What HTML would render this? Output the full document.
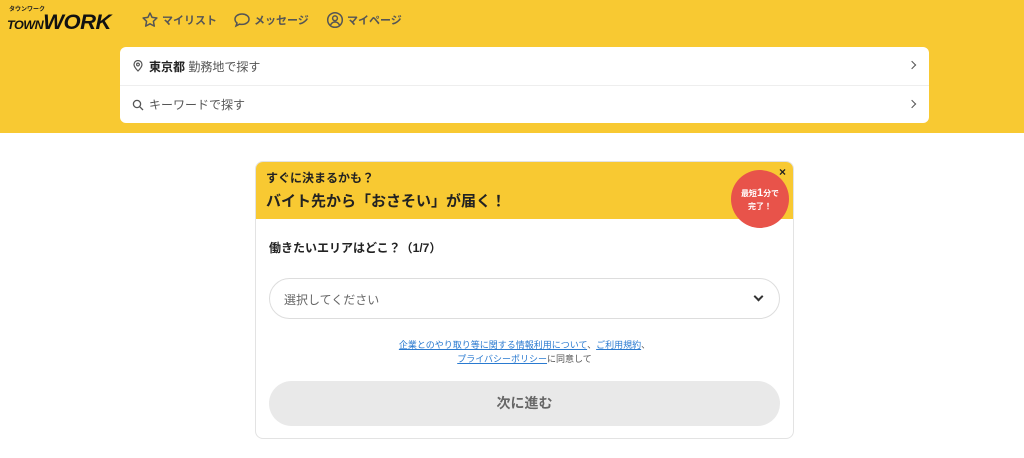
<!DOCTYPE html>
<html><head><meta charset="utf-8"><style>
*{box-sizing:border-box;margin:0;padding:0}
body{width:1024px;height:458px;overflow:hidden;background:#fff;font-family:"Liberation Sans","Noto Sans CJK JP",sans-serif;color:#222;position:relative}
.top{position:absolute;left:0;top:0;width:1024px;height:133px;background:#f8c932}
.logo{position:absolute;left:7px;top:7px}
.nav{position:absolute;top:11px;font-size:11px;color:#555;display:flex;align-items:center;gap:3px;font-weight:bold}
.search{position:absolute;left:120px;top:47px;width:809px;height:76px;background:#fff;border-radius:6px}
.row{height:38px;display:flex;align-items:center;padding-left:12px;font-size:12px;color:#555;position:relative}
.row+.row{border-top:1px solid #eee}
.chev{position:absolute;right:14px;top:15px;width:6px;height:6px;border-right:1.5px solid #555;border-top:1.5px solid #555;transform:rotate(45deg)}
.card{position:absolute;left:255px;top:161px;width:539px;height:278px;border:1px solid #e3e3e3;border-radius:8px;overflow:hidden}
.head{height:57px;background:#f8c932;padding:7px 0 0 10px}
.badge{position:absolute;left:731px;top:170px;width:58px;height:58px;border-radius:50%;background:#e8534a;color:#fff;font-size:8px;text-align:center;padding-top:17px;line-height:13px;font-weight:bold}
.sel{position:absolute;left:269px;top:278px;width:511px;height:41px;border:1px solid #ddd;border-radius:21px;font-size:12px;color:#666;padding:12px 0 0 14px}
.btn{position:absolute;left:269px;top:381px;width:511px;height:45px;background:#e9e9e9;border-radius:23px;text-align:center;font-size:14px;font-weight:bold;color:#666;line-height:45px}
a{color:#2a7ad0;text-decoration:underline}
</style></head><body>
<div class="top">
 <div class="logo"><div style="font-size:6px;font-weight:bold;margin-left:2px;line-height:6px">タウンワーク</div><div style="font-weight:900;font-style:italic;font-size:21px;line-height:19px;letter-spacing:-0.5px;color:#111;transform:scaleX(1.05);transform-origin:left"><span style="font-size:12px">TOWN</span>WORK</div></div>
 <div class="nav" style="left:141px"><svg width="18" height="18" viewBox="0 0 18 18"><path d="M9 2l2.1 4.4 4.8.6-3.5 3.3.9 4.8L9 12.8l-4.3 2.3.9-4.8L2.1 7l4.8-.6z" fill="none" stroke="#555" stroke-width="1.5" stroke-linejoin="round"/></svg>マイリスト</div>
 <div class="nav" style="left:233px"><svg width="18" height="18" viewBox="0 0 18 18"><path d="M9 3c4 0 7 2.3 7 5.2s-3 5.2-7 5.2c-.9 0-1.7-.1-2.4-.3L3 15l1-3C2.8 11 2 9.7 2 8.2 2 5.3 5 3 9 3z" fill="none" stroke="#555" stroke-width="1.5"/></svg>メッセージ</div>
 <div class="nav" style="left:326px"><svg width="18" height="18" viewBox="0 0 18 18"><circle cx="9" cy="9" r="7.3" fill="none" stroke="#555" stroke-width="1.5"/><circle cx="9" cy="7.3" r="2.4" fill="none" stroke="#555" stroke-width="1.5"/><path d="M4.5 14c1-2 2.5-3 4.5-3s3.5 1 4.5 3" fill="none" stroke="#555" stroke-width="1.5"/></svg>マイページ</div>
 <div class="search">
  <div class="row"><svg width="12" height="12" viewBox="0 0 12 12" style="margin-right:5px"><path d="M6 11S2 7 2 4.5a4 4 0 018 0C10 7 6 11 6 11z" fill="none" stroke="#555" stroke-width="1.2"/><circle cx="6" cy="4.5" r="1.4" fill="none" stroke="#555" stroke-width="1.2"/></svg><b style="color:#222">東京都</b>&nbsp;勤務地で探す<span class="chev"></span></div>
  <div class="row"><svg width="12" height="12" viewBox="0 0 12 12" style="margin-right:5px"><circle cx="5" cy="5" r="3.6" fill="none" stroke="#555" stroke-width="1.3"/><path d="M7.7 7.7L11 11" stroke="#555" stroke-width="1.3"/></svg>キーワードで探す<span class="chev"></span></div>
 </div>
</div>
<div class="card">
 <div class="head"><div style="font-size:12px;font-weight:bold">すぐに決まるかも？</div><div style="font-size:15px;font-weight:bold;margin-top:4px">バイト先から「おさそい」が届く！</div></div>
 <div style="position:absolute;right:7px;top:3px;font-size:12px;font-weight:bold">×</div>
 <div style="position:absolute;left:13px;top:77px;font-size:12px;font-weight:bold">働きたいエリアはどこ？（1/7）</div>
</div>
<div class="badge">最短<span style="font-size:11px">1</span>分で<br>完了！</div>
<div class="sel">選択してください<span style="position:absolute;right:17px;top:14px;width:7px;height:7px;border-right:2px solid #333;border-bottom:2px solid #333;transform:rotate(45deg)"></span></div>
<div style="position:absolute;left:269px;width:511px;top:338px;text-align:center;font-size:9px;line-height:14px;color:#555"><a>企業とのやり取り等に関する情報利用について</a>、<a>ご利用規約</a>、<br><a>プライバシーポリシー</a>に同意して</div>
<div class="btn">次に進む</div>
</body></html>
